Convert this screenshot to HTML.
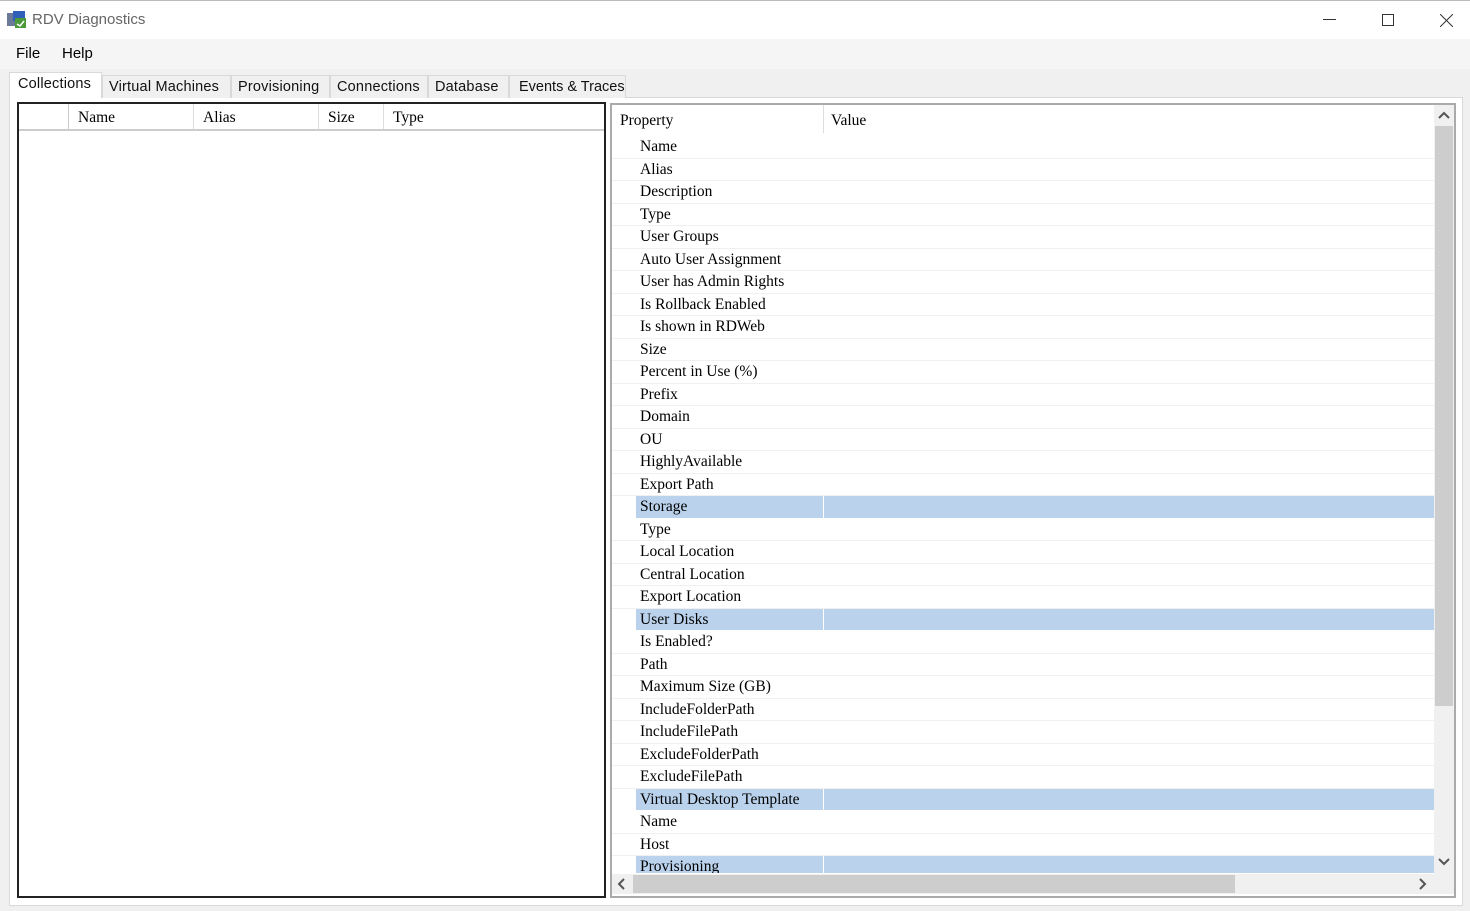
<!DOCTYPE html>
<html><head><style>
*{margin:0;padding:0;box-sizing:border-box}
body{width:1470px;height:911px;background:#f0f0f0;position:relative;overflow:hidden;font-family:"Liberation Sans",sans-serif}
.a{position:absolute}
.title{left:0;top:0;width:1470px;height:39px;background:#fff;border-top:1px solid #bbb}
.menu{left:0;top:39px;width:1470px;height:30px;background:#f5f5f5;font-size:15px}
.tab{top:75px;height:23px;font-size:14.5px;letter-spacing:0.2px;color:#111;border:1px solid #d9d9d9;border-bottom:none;background:#f0f0f0;padding:3px 0 0 6px;white-space:nowrap;overflow:hidden}
.ser{font-family:"Liberation Serif",serif;font-size:15.5px;color:#000}
.row{position:absolute;left:612px;width:822px;height:22.5px;border-bottom:1px solid #f0f0f0}
.row span{position:absolute;left:28px;top:2px}
.row.h{background:#bad2ec;border-bottom:1px solid #fff}
.row.h:before{content:"";position:absolute;left:0;top:0;width:24px;height:100%;background:#fff}
.row:after{content:"";position:absolute;left:211px;top:0;width:1px;height:100%;background:#fff}
</style></head><body>
<div class="a title">
<svg class="a" style="left:7px;top:10px" width="20" height="18"><rect x="0" y="2" width="11" height="13" fill="#6b7a99"/><rect x="6" y="0" width="12" height="10" fill="#2f5fb8"/><rect x="8" y="7" width="11" height="10" fill="#4a9a3a"/><path d="M10 13l3 2 4-5" stroke="#fff" fill="none" stroke-width="1.5"/></svg>
<div class="a" style="left:32px;top:10px;font-size:15px;color:#666">RDV Diagnostics</div>
<div class="a" style="left:1323px;top:18px;width:13px;height:1px;background:#333"></div>
<div class="a" style="left:1382px;top:13px;width:12px;height:12px;border:1px solid #333"></div>
<svg class="a" style="left:1440px;top:13px" width="13" height="13"><path d="M0 0L13 13M13 0L0 13" stroke="#333"/></svg>
</div>
<div class="a menu"><span class="a" style="left:16px;top:6px">File</span><span class="a" style="left:62px;top:6px">Help</span></div>
<div class="a" style="left:9px;top:97px;width:1454px;height:809px;border:1px solid #d9d9d9;background:#fff"></div>
<div class="a tab" style="left:9px;top:72px;height:26px;width:93px;background:#fff;padding-left:8px">Collections</div>
<div class="a tab" style="left:102px;width:129px">Virtual Machines</div>
<div class="a tab" style="left:231px;width:99px">Provisioning</div>
<div class="a tab" style="left:330px;width:98px">Connections</div>
<div class="a tab" style="left:428px;width:81px">Database</div>
<div class="a tab" style="left:509px;width:117px;padding-left:9px;letter-spacing:0">Events &amp; Traces</div>
<div class="a" style="left:17px;top:102px;width:589px;height:796px;border:2px solid #222;background:#fff"></div>
<div class="a ser" style="left:19px;top:104px;width:585px;height:27px;border-bottom:2px solid #ccc">
<div class="a" style="left:49px;top:0;width:1px;height:25px;background:#ccc"></div>
<div class="a" style="left:174px;top:0;width:1px;height:25px;background:#ddd"></div>
<div class="a" style="left:299px;top:0;width:1px;height:25px;background:#ddd"></div>
<div class="a" style="left:364px;top:0;width:1px;height:25px;background:#ddd"></div>
<span class="a" style="left:59px;top:5px">Name</span><span class="a" style="left:184px;top:5px">Alias</span><span class="a" style="left:309px;top:5px">Size</span><span class="a" style="left:374px;top:5px">Type</span>
</div>
<div class="a" style="left:610px;top:103px;width:846px;height:795px;border:2px solid #aaa;background:#fff"></div>
<div class="a ser" style="left:620px;top:112px">Property</div>
<div class="a" style="left:823px;top:105px;width:1px;height:28px;background:#ddd"></div>
<div class="a ser" style="left:831px;top:112px">Value</div>
<div class="ser">
<div class="row" style="top:136px"><span>Name</span></div>
<div class="row" style="top:158.5px"><span>Alias</span></div>
<div class="row" style="top:181px"><span>Description</span></div>
<div class="row" style="top:203.5px"><span>Type</span></div>
<div class="row" style="top:226px"><span>User Groups</span></div>
<div class="row" style="top:248.5px"><span>Auto User Assignment</span></div>
<div class="row" style="top:271px"><span>User has Admin Rights</span></div>
<div class="row" style="top:293.5px"><span>Is Rollback Enabled</span></div>
<div class="row" style="top:316px"><span>Is shown in RDWeb</span></div>
<div class="row" style="top:338.5px"><span>Size</span></div>
<div class="row" style="top:361px"><span>Percent in Use (%)</span></div>
<div class="row" style="top:383.5px"><span>Prefix</span></div>
<div class="row" style="top:406px"><span>Domain</span></div>
<div class="row" style="top:428.5px"><span>OU</span></div>
<div class="row" style="top:451px"><span>HighlyAvailable</span></div>
<div class="row" style="top:473.5px"><span>Export Path</span></div>
<div class="row h" style="top:496px"><span>Storage</span></div>
<div class="row" style="top:518.5px"><span>Type</span></div>
<div class="row" style="top:541px"><span>Local Location</span></div>
<div class="row" style="top:563.5px"><span>Central Location</span></div>
<div class="row" style="top:586px"><span>Export Location</span></div>
<div class="row h" style="top:608.5px"><span>User Disks</span></div>
<div class="row" style="top:631px"><span>Is Enabled?</span></div>
<div class="row" style="top:653.5px"><span>Path</span></div>
<div class="row" style="top:676px"><span>Maximum Size (GB)</span></div>
<div class="row" style="top:698.5px"><span>IncludeFolderPath</span></div>
<div class="row" style="top:721px"><span>IncludeFilePath</span></div>
<div class="row" style="top:743.5px"><span>ExcludeFolderPath</span></div>
<div class="row" style="top:766px"><span>ExcludeFilePath</span></div>
<div class="row h" style="top:788.5px"><span>Virtual Desktop Template</span></div>
<div class="row" style="top:811px"><span>Name</span></div>
<div class="row" style="top:833.5px"><span>Host</span></div>
<div class="row h" style="top:856px;height:18px;overflow:hidden"><span>Provisioning</span></div>
</div>
<div class="a" style="left:612px;top:874px;width:842px;height:20px;background:#f0f0f0"></div>
<div class="a" style="left:1434px;top:105px;width:20px;height:769px;background:#f0f0f0"></div>
<div class="a" style="left:1435px;top:126px;width:18px;height:580px;background:#cdcdcd"></div>
<div class="a" style="left:633px;top:875px;width:602px;height:18px;background:#cdcdcd"></div>
<svg class="a" style="left:1438px;top:111px" width="12" height="10"><path d="M1 7L6 2L11 7" stroke="#555" stroke-width="2" fill="none"/></svg>
<svg class="a" style="left:1438px;top:857px" width="12" height="10"><path d="M1 2L6 7L11 2" stroke="#555" stroke-width="2" fill="none"/></svg>
<svg class="a" style="left:617px;top:878px" width="10" height="12"><path d="M7 1L2 6L7 11" stroke="#555" stroke-width="2" fill="none"/></svg>
<svg class="a" style="left:1418px;top:878px" width="10" height="12"><path d="M2 1L7 6L2 11" stroke="#555" stroke-width="2" fill="none"/></svg>
</body></html>
